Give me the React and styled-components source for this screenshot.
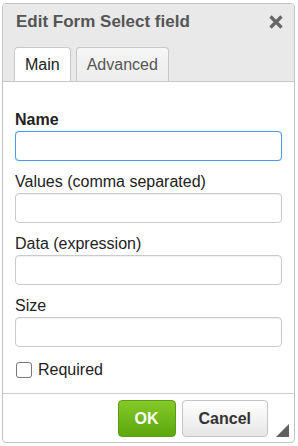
import React from "react";
import styled, { createGlobalStyle } from "styled-components";

const Global = createGlobalStyle`
  html, body { margin: 0; padding: 0; background: #fff; }
  body { font-family: "Liberation Sans", Arial, sans-serif; }
  * { box-sizing: border-box; }
`;

const Dialog = styled.div`
  position: relative;
  margin: 3px 0 0 2px;
  width: 293px;
  height: 440px;
  border: 1px solid #c3c3c3;
  border-radius: 4px;
  display: flex;
  flex-direction: column;
  overflow: hidden;
  background: #fff;
`;

const Header = styled.div`
  background: #e9e9e9;
  border-bottom: 1px solid #c8c8c8;
`;

const TitleBar = styled.div`
  height: 36px;
  display: flex;
  align-items: center;
  justify-content: space-between;
  padding: 0 9px 0 13px;
`;

const Title = styled.div`
  font-size: 17px;
  font-weight: bold;
  color: #555;
`;

const Close = styled.button`
  border: 0;
  background: none;
  padding: 0;
  width: 18px;
  height: 18px;
  display: flex;
  align-items: center;
  justify-content: center;
  cursor: pointer;
`;

const TabBar = styled.div`
  display: flex;
  gap: 5px;
  padding: 7px 0 0 11px;
`;

const Tab = styled.div`
  height: 34px;
  line-height: 33px;
  padding: 0 10px;
  font-size: 16px;
  border: 1px solid #c8c8c8;
  border-bottom: none;
  border-radius: 4px 4px 0 0;
  color: ${(p) => (p.$active ? "#222" : "#555")};
  background: ${(p) =>
    p.$active ? "#fff" : "linear-gradient(#f6f6f6, #ececec)"};
`;

const Body = styled.div`
  flex: 1;
  padding: 29px 12px 0;
  display: flex;
  flex-direction: column;
`;

const Field = styled.div`
  display: flex;
  flex-direction: column;
  gap: 2px;
  margin-bottom: 12px;
`;

const Label = styled.label`
  font-size: 16px;
  line-height: 18px;
  color: #222;
  font-weight: ${(p) => (p.$bold ? "bold" : "normal")};
`;

const Input = styled.div`
  height: 30px;
  border: 1px solid ${(p) => (p.$focus ? "#4a9ce6" : "#cacaca")};
  border-radius: 4px;
  background: #fff;
  box-shadow: ${(p) =>
    p.$focus ? "0 0 1px rgba(74,156,230,0.6)" : "inset 0 1px 1px rgba(0,0,0,0.06)"};
`;

const CheckRow = styled.div`
  display: flex;
  align-items: center;
  gap: 6px;
  margin-top: 2px;
  font-size: 16px;
  color: #222;
`;

const Box = styled.span`
  width: 16px;
  height: 16px;
  border: 1px solid #777;
  border-radius: 3px;
  background: #fff;
  margin-left: 1px;
`;

const Footer = styled.div`
  border-top: 1px solid #cccccc;
  height: 49px;
  padding: 6px 26px 0 0;
  display: flex;
  justify-content: flex-end;
  gap: 6px;
`;

const Button = styled.button`
  height: 37px;
  padding: 0 16px;
  font-family: "Liberation Sans", Arial, sans-serif;
  font-size: 16px;
  font-weight: bold;
  border-radius: 4px;
  cursor: pointer;
  border: 1px solid ${(p) => (p.$primary ? "#5a9c12" : "#c4c4c4")};
  color: ${(p) => (p.$primary ? "#fff" : "#333")};
  background: ${(p) =>
    p.$primary
      ? "linear-gradient(#84c927, #5ca70f)"
      : "linear-gradient(#ffffff, #e6e6e6)"};
  min-width: ${(p) => (p.$primary ? "58px" : "86px")};
`;

const Grip = styled.div`
  position: absolute;
  right: 5px;
  bottom: 5px;
  width: 0;
  height: 0;
  border-left: 13px solid transparent;
  border-bottom: 13px solid #5f5f5f;
`;

const fields = [
  { label: "Name", bold: true, focus: true },
  { label: "Values (comma separated)" },
  { label: "Data (expression)" },
  { label: "Size" },
];

export default function App() {
  return (
    <>
      <Global />
      <Dialog>
        <Header>
          <TitleBar>
            <Title>Edit Form Select field</Title>
            <Close aria-label="Close">
              <svg width="16" height="16" viewBox="0 0 16 16">
                <path
                  d="M2.5 2.5 L13.5 13.5 M13.5 2.5 L2.5 13.5"
                  stroke="#666"
                  strokeWidth="3.2"
                  strokeLinecap="butt"
                />
              </svg>
            </Close>
          </TitleBar>
          <TabBar>
            <Tab $active>Main</Tab>
            <Tab>Advanced</Tab>
          </TabBar>
        </Header>
        <Body>
          {fields.map((f) => (
            <Field key={f.label}>
              <Label $bold={f.bold}>{f.label}</Label>
              <Input $focus={f.focus} />
            </Field>
          ))}
          <CheckRow>
            <Box />
            <span>Required</span>
          </CheckRow>
        </Body>
        <Footer>
          <Button $primary>OK</Button>
          <Button>Cancel</Button>
        </Footer>
        <Grip />
      </Dialog>
    </>
  );
}
